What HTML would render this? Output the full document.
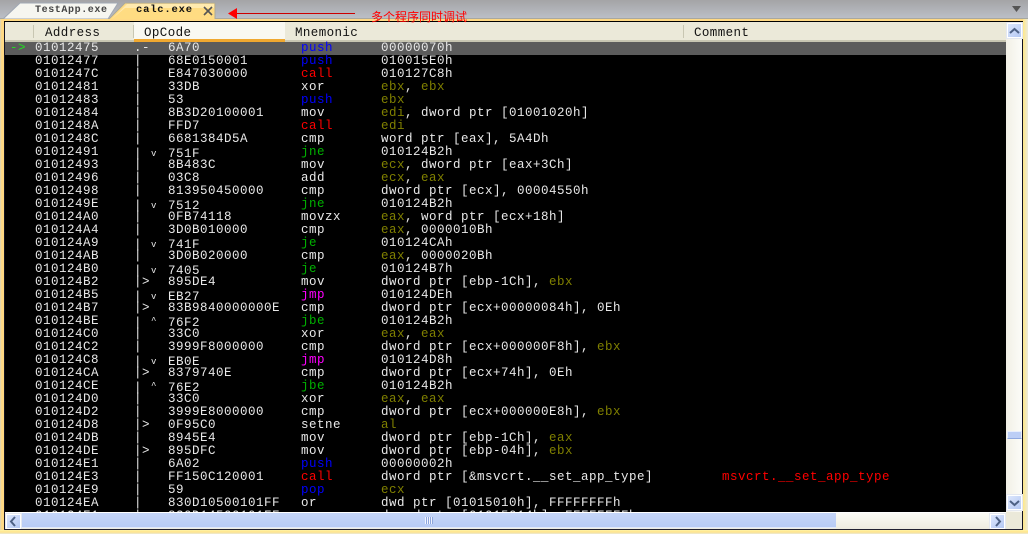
<!DOCTYPE html>
<html><head><meta charset="utf-8"><style>
html,body{margin:0;padding:0;background:#000}
#p{position:relative;width:1028px;height:534px;overflow:hidden;background:#000;font-family:"Liberation Mono",monospace;font-size:12.5px;letter-spacing:.5px;color:#e8e8e8}
.a{position:absolute}
.r{position:absolute;left:0;width:1006px;height:13px;line-height:13px;white-space:pre}
.r span{position:absolute;top:0}
.ad{left:35px}.pf{left:134px}.op{left:168px}.mn{left:301px}.ar{left:381px}
.r span.o{color:#808000;position:static}
.r span.ar.o{position:absolute}
.bl{color:#0000ff}.rd{color:#ff0000}.gr{color:#00b000}.mg{color:#ff00ff}
.lw{font-size:9px}
.hd{position:absolute;top:26px;line-height:14px;color:#111;letter-spacing:.4px}
.btn{position:absolute;background:linear-gradient(135deg,#dce6fc,#b4c8f4);border:1px solid #fff;box-sizing:border-box;box-shadow:0 0 0 1px #e4e8f0}
</style></head><body><div id="p">

<!-- tab bar -->
<div class="a" style="left:0;top:0;width:1028px;height:19px;background:linear-gradient(#a4a4a6,#bcc0c8)"></div>
<div class="a" style="left:0;top:18px;width:1028px;height:2px;background:#a8a8a0"></div>
<svg class="a" style="left:0;top:0" width="230" height="22">
<path d="M3 19 L20 3 L118 3 L108 19Z" fill="#f6f6f0" stroke="#a0a8b4"/>
<path d="M108 20 L125 3 L215 3 L215 20Z" fill="#ffdc82" stroke="#a8a89c"/>
<path d="M112 19 L127 4 L214 4 L214 8 L125 8Z" fill="#fff0c0" opacity=".7"/>
<path d="M204 7 L212 15 M212 7 L204 15" stroke="#555" stroke-width="1.6"/>
</svg>
<div class="a" style="left:35px;top:4px;font-size:10px;line-height:13px;color:#444;letter-spacing:.6px;font-weight:bold">TestApp.exe</div>
<div class="a" style="left:136px;top:4px;font-size:10.5px;line-height:13px;color:#111;font-weight:bold;letter-spacing:.8px">calc.exe</div>
<div class="a" style="left:235px;top:12.5px;width:120px;height:1px;background:#c00"></div>
<svg class="a" style="left:228px;top:8px" width="10" height="11"><path d="M0 5.5L9 0V11Z" fill="#f00"/></svg>
<div class="a" style="left:371px;top:10px;font-family:'Liberation Sans','Noto Sans CJK SC',sans-serif;font-size:12px;letter-spacing:0;line-height:14px;color:#f00;z-index:5">多个程序同时调试</div>
<svg class="a" style="left:1012px;top:6px" width="10" height="7"><path d="M0 0H9L4.5 6Z" fill="#555"/></svg>

<!-- frame -->
<div class="a" style="left:0;top:19px;width:1028px;height:2px;background:#ffd984"></div>
<div class="a" style="left:0;top:19px;width:4px;height:515px;background:linear-gradient(90deg,#d8d4c0,#ffd984 40%)"></div>
<div class="a" style="left:1023px;top:19px;width:5px;height:515px;background:linear-gradient(90deg,#ffe888,#eceadc)"></div>
<div class="a" style="left:4px;top:21px;width:1px;height:509px;background:#112"></div>
<div class="a" style="left:1022px;top:21px;width:1px;height:509px;background:#112"></div>
<div class="a" style="left:4px;top:21px;width:1019px;height:1px;background:#000"></div>

<!-- header -->
<div class="a" style="left:5px;top:22px;width:1001px;height:18px;background:#ebe9d9"></div>
<div class="a" style="left:5px;top:40px;width:1001px;height:2px;background:#c8c6b2"></div>
<div class="a" style="left:134px;top:22px;width:151px;height:17px;background:#f9f8f1"></div>
<div class="a" style="left:134px;top:39px;width:151px;height:3px;background:#f0a830"></div>
<div class="a" style="left:33px;top:25px;width:1px;height:13px;background:#c8c6b2"></div>
<div class="a" style="left:133px;top:25px;width:1px;height:13px;background:#c8c6b2"></div>
<div class="a" style="left:683px;top:25px;width:1px;height:13px;background:#c8c6b2"></div>
<div class="hd" style="left:45px">Address</div>
<div class="hd" style="left:144px">OpCode</div>
<div class="hd" style="left:295px">Mnemonic</div>
<div class="hd" style="left:694px">Comment</div>

<!-- rows -->
<div class="a" style="left:5px;top:42px;width:1001px;height:13px;background:#5c5c5c"></div>
<div class="a" style="left:10px;top:42px;line-height:13px;color:#20e020;height:13px">-&gt;</div>

<div class="r" style="top:42px"><span class="ad">01012475</span><span class="pf">.-</span><span class="op">6A70</span><span class="mn bl">push</span><span class="ar">00000070h</span></div>
<div class="r" style="top:55px"><span class="ad">01012477</span><span class="pf">|</span><span class="op">68E0150001</span><span class="mn bl">push</span><span class="ar">010015E0h</span></div>
<div class="r" style="top:68px"><span class="ad">0101247C</span><span class="pf">|</span><span class="op">E847030000</span><span class="mn rd">call</span><span class="ar">010127C8h</span></div>
<div class="r" style="top:81px"><span class="ad">01012481</span><span class="pf">|</span><span class="op">33DB</span><span class="mn">xor</span><span class="ar"><span class="o">ebx</span>, <span class="o">ebx</span></span></div>
<div class="r" style="top:94px"><span class="ad">01012483</span><span class="pf">|</span><span class="op">53</span><span class="mn bl">push</span><span class="ar o">ebx</span></div>
<div class="r" style="top:107px"><span class="ad">01012484</span><span class="pf">|</span><span class="op">8B3D20100001</span><span class="mn">mov</span><span class="ar"><span class="o">edi</span>, dword ptr [01001020h]</span></div>
<div class="r" style="top:120px"><span class="ad">0101248A</span><span class="pf">|</span><span class="op">FFD7</span><span class="mn rd">call</span><span class="ar o">edi</span></div>
<div class="r" style="top:133px"><span class="ad">0101248C</span><span class="pf">|</span><span class="op">6681384D5A</span><span class="mn">cmp</span><span class="ar">word ptr [eax], 5A4Dh</span></div>
<div class="r" style="top:146px"><span class="ad">01012491</span><span class="pf" style="top:2px">|</span><span class="pf lw" style="left:151px;top:2px">v</span><span class="op" style="top:2px">751F</span><span class="mn gr">jne</span><span class="ar">010124B2h</span></div>
<div class="r" style="top:159px"><span class="ad">01012493</span><span class="pf">|</span><span class="op">8B483C</span><span class="mn">mov</span><span class="ar"><span class="o">ecx</span>, dword ptr [eax+3Ch]</span></div>
<div class="r" style="top:172px"><span class="ad">01012496</span><span class="pf">|</span><span class="op">03C8</span><span class="mn">add</span><span class="ar"><span class="o">ecx</span>, <span class="o">eax</span></span></div>
<div class="r" style="top:185px"><span class="ad">01012498</span><span class="pf">|</span><span class="op">813950450000</span><span class="mn">cmp</span><span class="ar">dword ptr [ecx], 00004550h</span></div>
<div class="r" style="top:198px"><span class="ad">0101249E</span><span class="pf" style="top:2px">|</span><span class="pf lw" style="left:151px;top:2px">v</span><span class="op" style="top:2px">7512</span><span class="mn gr">jne</span><span class="ar">010124B2h</span></div>
<div class="r" style="top:211px"><span class="ad">010124A0</span><span class="pf">|</span><span class="op">0FB74118</span><span class="mn">movzx</span><span class="ar"><span class="o">eax</span>, word ptr [ecx+18h]</span></div>
<div class="r" style="top:224px"><span class="ad">010124A4</span><span class="pf">|</span><span class="op">3D0B010000</span><span class="mn">cmp</span><span class="ar"><span class="o">eax</span>, 0000010Bh</span></div>
<div class="r" style="top:237px"><span class="ad">010124A9</span><span class="pf" style="top:2px">|</span><span class="pf lw" style="left:151px;top:2px">v</span><span class="op" style="top:2px">741F</span><span class="mn gr">je</span><span class="ar">010124CAh</span></div>
<div class="r" style="top:250px"><span class="ad">010124AB</span><span class="pf">|</span><span class="op">3D0B020000</span><span class="mn">cmp</span><span class="ar"><span class="o">eax</span>, 0000020Bh</span></div>
<div class="r" style="top:263px"><span class="ad">010124B0</span><span class="pf" style="top:2px">|</span><span class="pf lw" style="left:151px;top:2px">v</span><span class="op" style="top:2px">7405</span><span class="mn gr">je</span><span class="ar">010124B7h</span></div>
<div class="r" style="top:276px"><span class="ad">010124B2</span><span class="pf">|&gt;</span><span class="op">895DE4</span><span class="mn">mov</span><span class="ar">dword ptr [ebp-1Ch], <span class="o">ebx</span></span></div>
<div class="r" style="top:289px"><span class="ad">010124B5</span><span class="pf" style="top:2px">|</span><span class="pf lw" style="left:151px;top:2px">v</span><span class="op" style="top:2px">EB27</span><span class="mn mg">jmp</span><span class="ar">010124DEh</span></div>
<div class="r" style="top:302px"><span class="ad">010124B7</span><span class="pf">|&gt;</span><span class="op">83B9840000000E</span><span class="mn">cmp</span><span class="ar">dword ptr [ecx+00000084h], 0Eh</span></div>
<div class="r" style="top:315px"><span class="ad">010124BE</span><span class="pf" style="top:2px">|</span><span class="pf lw" style="left:151px;top:0">^</span><span class="op" style="top:2px">76F2</span><span class="mn gr">jbe</span><span class="ar">010124B2h</span></div>
<div class="r" style="top:328px"><span class="ad">010124C0</span><span class="pf">|</span><span class="op">33C0</span><span class="mn">xor</span><span class="ar"><span class="o">eax</span>, <span class="o">eax</span></span></div>
<div class="r" style="top:341px"><span class="ad">010124C2</span><span class="pf">|</span><span class="op">3999F8000000</span><span class="mn">cmp</span><span class="ar">dword ptr [ecx+000000F8h], <span class="o">ebx</span></span></div>
<div class="r" style="top:354px"><span class="ad">010124C8</span><span class="pf" style="top:2px">|</span><span class="pf lw" style="left:151px;top:2px">v</span><span class="op" style="top:2px">EB0E</span><span class="mn mg">jmp</span><span class="ar">010124D8h</span></div>
<div class="r" style="top:367px"><span class="ad">010124CA</span><span class="pf">|&gt;</span><span class="op">8379740E</span><span class="mn">cmp</span><span class="ar">dword ptr [ecx+74h], 0Eh</span></div>
<div class="r" style="top:380px"><span class="ad">010124CE</span><span class="pf" style="top:2px">|</span><span class="pf lw" style="left:151px;top:0">^</span><span class="op" style="top:2px">76E2</span><span class="mn gr">jbe</span><span class="ar">010124B2h</span></div>
<div class="r" style="top:393px"><span class="ad">010124D0</span><span class="pf">|</span><span class="op">33C0</span><span class="mn">xor</span><span class="ar"><span class="o">eax</span>, <span class="o">eax</span></span></div>
<div class="r" style="top:406px"><span class="ad">010124D2</span><span class="pf">|</span><span class="op">3999E8000000</span><span class="mn">cmp</span><span class="ar">dword ptr [ecx+000000E8h], <span class="o">ebx</span></span></div>
<div class="r" style="top:419px"><span class="ad">010124D8</span><span class="pf">|&gt;</span><span class="op">0F95C0</span><span class="mn">setne</span><span class="ar o">al</span></div>
<div class="r" style="top:432px"><span class="ad">010124DB</span><span class="pf">|</span><span class="op">8945E4</span><span class="mn">mov</span><span class="ar">dword ptr [ebp-1Ch], <span class="o">eax</span></span></div>
<div class="r" style="top:445px"><span class="ad">010124DE</span><span class="pf">|&gt;</span><span class="op">895DFC</span><span class="mn">mov</span><span class="ar">dword ptr [ebp-04h], <span class="o">ebx</span></span></div>
<div class="r" style="top:458px"><span class="ad">010124E1</span><span class="pf">|</span><span class="op">6A02</span><span class="mn bl">push</span><span class="ar">00000002h</span></div>
<div class="r" style="top:471px"><span class="ad">010124E3</span><span class="pf">|</span><span class="op">FF150C120001</span><span class="mn rd">call</span><span class="ar">dword ptr [&amp;msvcrt.__set_app_type]</span><span class="rd" style="left:722px">msvcrt.__set_app_type</span></div>
<div class="r" style="top:484px"><span class="ad">010124E9</span><span class="pf">|</span><span class="op">59</span><span class="mn bl">pop</span><span class="ar o">ecx</span></div>
<div class="r" style="top:497px"><span class="ad">010124EA</span><span class="pf">|</span><span class="op">830D10500101FF</span><span class="mn">or</span><span class="ar">dwd ptr [01015010h], FFFFFFFFh</span></div>
<div class="r" style="top:510px"><span class="ad">010124F1</span><span class="pf">|</span><span class="op">830D14500101FF</span><span class="mn">or</span><span class="ar">dword ptr [01015014h], FFFFFFFFh</span></div>

<!-- vertical scrollbar -->
<div class="a" style="left:1006px;top:22px;width:16px;height:490px;background:linear-gradient(90deg,#f2f0e6,#fcfcf8)"></div>
<div class="btn" style="left:1007px;top:23px;width:15px;height:15px"></div>
<svg class="a" style="left:1009px;top:27px" width="11" height="8"><path d="M1 6L5.5 2L10 6" fill="none" stroke="#4d6185" stroke-width="2"/></svg>
<div class="a" style="left:1007px;top:431px;width:15px;height:8px;background:#bccef6;border:1px solid #e8eefc;border-bottom-color:#8fa8e0;box-sizing:border-box"></div>
<div class="btn" style="left:1007px;top:495px;width:15px;height:15px"></div>
<svg class="a" style="left:1009px;top:499px" width="11" height="8"><path d="M1 2L5.5 6L10 2" fill="none" stroke="#4d6185" stroke-width="2"/></svg>

<!-- horizontal scrollbar -->
<div class="a" style="left:5px;top:512px;width:1001px;height:17px;background:linear-gradient(#fbfbf6,#eeece0);border-top:1px solid #fff;box-sizing:border-box"></div>
<div class="a" style="left:22px;top:513px;width:814px;height:15px;background:linear-gradient(#c6d6f8,#b8cbf5);border-bottom:1px solid #dfe7fb;box-sizing:border-box"></div>
<div class="a" style="left:425px;top:517px;width:8px;height:7px;background:repeating-linear-gradient(90deg,#f0f4ff 0 1px,#8ea6dc 1px 2px)"></div>
<div class="btn" style="left:6px;top:514px;width:15px;height:15px"></div>
<svg class="a" style="left:9px;top:516px" width="8" height="11"><path d="M6 1L2 5.5L6 10" fill="none" stroke="#4d6185" stroke-width="2"/></svg>
<div class="btn" style="left:990px;top:514px;width:15px;height:15px"></div>
<svg class="a" style="left:994px;top:516px" width="8" height="11"><path d="M2 1L6 5.5L2 10" fill="none" stroke="#4d6185" stroke-width="2"/></svg>
<div class="a" style="left:1006px;top:512px;width:16px;height:17px;background:#ebe9d9"></div>

<!-- bottom frame -->
<div class="a" style="left:4px;top:529px;width:1019px;height:1px;background:#223"></div>
<div class="a" style="left:0;top:530px;width:1028px;height:4px;background:linear-gradient(#fff3a8,#ffe48a 50%,#ecead8)"></div>
</div></body></html>
